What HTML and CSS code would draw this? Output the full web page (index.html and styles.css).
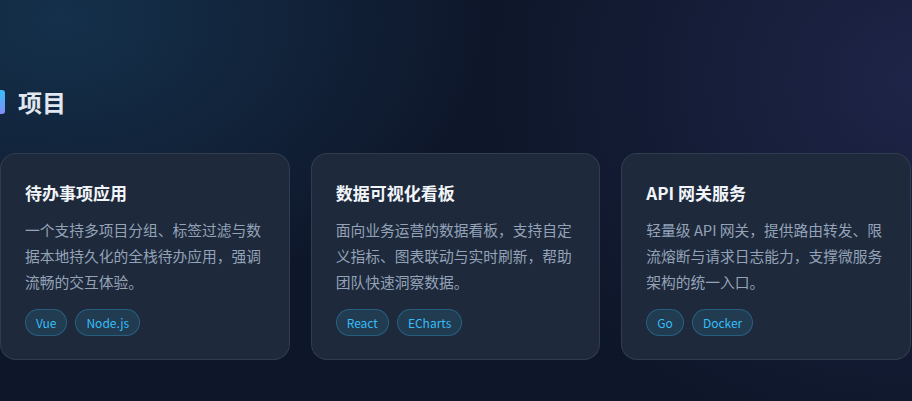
FILE: index.html
```html
<!DOCTYPE html>
<html lang="zh-CN">
<head>
<meta charset="utf-8">
<title>项目</title>
<link rel="stylesheet" href="styles.css">
</head>
<body>
<section class="projects">
  <h2 class="section-title"><span class="bar"></span>项目</h2>
  <div class="grid">
    <article class="card">
      <h3 class="card-title">待办事项应用</h3>
      <p class="card-desc">一个支持多项目分组、标签过滤与数据本地持久化的全栈待办应用，强调流畅的交互体验。</p>
      <div class="tags"><span class="tag">Vue</span><span class="tag">Node.js</span></div>
    </article>
    <article class="card">
      <h3 class="card-title">数据可视化看板</h3>
      <p class="card-desc">面向业务运营的数据看板，支持自定义指标、图表联动与实时刷新，帮助团队快速洞察数据。</p>
      <div class="tags"><span class="tag">React</span><span class="tag">ECharts</span></div>
    </article>
    <article class="card">
      <h3 class="card-title">API 网关服务</h3>
      <p class="card-desc">轻量级 API 网关，提供路由转发、限流熔断与请求日志能力，支撑微服务架构的统一入口。</p>
      <div class="tags"><span class="tag">Go</span><span class="tag">Docker</span></div>
    </article>
  </div>
</section>
</body>
</html>
```

FILE: styles.css
```css
html, body {
  margin: 0;
  padding: 0;
  height: 100%;
}
body {
  font-family: "Noto Sans CJK SC", "Noto Sans", sans-serif;
  background-color: #0e1629;
  background-image:
    radial-gradient(ellipse 440px 300px at 60px 20px, rgba(25, 66, 98, 0.6), rgba(25, 66, 98, 0) 100%),
    radial-gradient(ellipse 440px 380px at 920px 80px, rgba(40, 46, 92, 0.6), rgba(40, 46, 92, 0) 100%);
  overflow: hidden;
}
.projects {
  padding-top: 87px;
  width: 911px;
}
.section-title {
  display: flex;
  align-items: center;
  gap: 13px;
  margin: 0 0 37px 0;
  font-size: 24px;
  line-height: 29px;
  font-weight: 700;
  color: #e2e8f0;
}
.bar {
  width: 5px;
  height: 24px;
  border-radius: 0 3px 3px 0;
  background: linear-gradient(180deg, #38bdf8, #818cf8);
}
.grid {
  display: grid;
  grid-template-columns: repeat(3, 1fr);
  gap: 21px;
}
.card {
  background: #1e293b;
  border: 1px solid rgba(148, 163, 184, 0.16);
  border-radius: 16px;
  padding: 27px 24px 23px 24px;
}
.card-title {
  margin: 0 0 12px 0;
  font-size: 17px;
  line-height: 24px;
  font-weight: 700;
  color: #f1f5f9;
}
.card-desc {
  margin: 0 0 14px 0;
  font-size: 14.75px;
  line-height: 26px;
  color: #94a3b8;
}
.tags {
  display: flex;
  gap: 8px;
}
.tag {
  display: inline-flex;
  align-items: center;
  height: 27px;
  box-sizing: border-box;
  padding: 0 10px;
  border-radius: 999px;
  border: 1px solid rgba(56, 189, 248, 0.28);
  background: rgba(56, 189, 248, 0.12);
  color: #38bdf8;
  font-size: 12px;
}
```
